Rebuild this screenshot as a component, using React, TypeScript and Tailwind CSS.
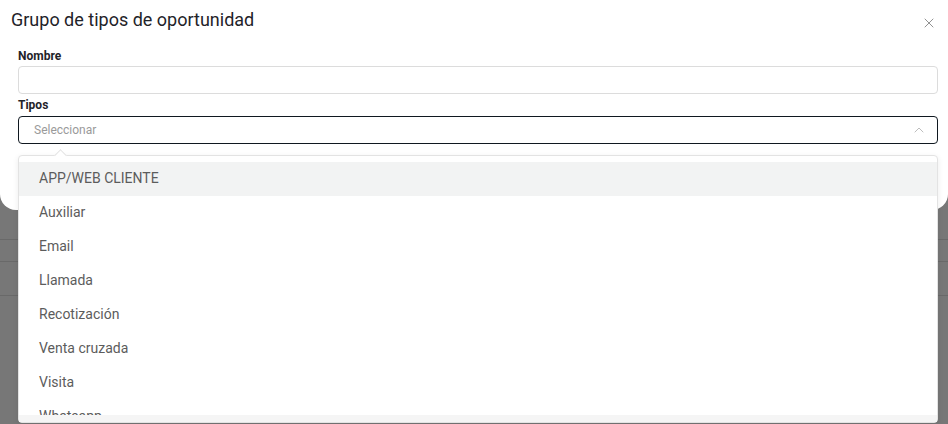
import { X, ChevronUp } from "lucide-react"

const tipos = [
  "APP/WEB CLIENTE",
  "Auxiliar",
  "Email",
  "Llamada",
  "Recotización",
  "Venta cruzada",
  "Visita",
  "Whatsapp",
]

export default function App() {
  return (
    <div className="relative h-[424px] w-[948px] overflow-hidden bg-[#777777] font-['Roboto',sans-serif]">
      {/* table rows behind the backdrop */}
      <div className="absolute inset-x-0 top-[210px] flex flex-col">
        <div className="h-[30px] border-b border-[#696969]" />
        <div className="h-[22px] border-b border-[#696969]" />
        <div className="h-[34px] border-b border-[#696969]" />
      </div>

      <div className="relative rounded-b-[16px] bg-white pb-[66px] pl-[18px] pr-[10px]">
        <div className="flex h-[38px] items-center justify-between -ml-[7px] pt-px">
          <h2 className="text-[18px] text-[#1f2329]">Grupo de tipos de oportunidad</h2>
          <X className="mr-[1px] mt-[6px] h-[16px] w-[16px] text-[#8a8a8a]" strokeWidth={1.4} />
        </div>

        <div className="mt-[10px] text-[12px] font-bold leading-[16px] text-[#1f2329]">Nombre</div>
        <div className="mt-[2px] h-[28px] rounded-[4px] border border-[#dcdcdc]" />

        <div className="mt-[3px] text-[12px] font-bold leading-[16px] text-[#1f2329]">Tipos</div>
        <div className="mt-[3px] flex h-[28px] items-center justify-between rounded-[4px] border border-[#101820] pl-[15px] pr-[10px]">
          <span className="text-[12px] text-[#9a9a9a]">Seleccionar</span>
          <ChevronUp className="h-[16px] w-[16px] text-[#b0b0b0]" strokeWidth={1.25} />
        </div>
      </div>

      {/* dropdown */}
      <div className="absolute left-[18px] top-[155px] w-[920px] rounded-[4px] border border-[#e3e3e3] bg-white shadow-[0_2px_6px_rgba(0,0,0,0.08)]">
        <div className="absolute -top-[5px] left-[37px] h-[9px] w-[9px] rotate-45 border-l border-t border-[#e3e3e3] bg-white" />
        <div className="relative h-[259px] overflow-hidden pt-[6px]">
          {tipos.map((t, i) => (
            <div
              key={t}
              className={`flex h-[34px] items-center px-[20px] pb-px text-[14px] text-[#5c5c5c] ${i === 0 ? "bg-[#f2f3f3]" : ""}`}
            >
              {t}
            </div>
          ))}
        </div>
        <div className="h-[7px] bg-[#f5f5f5]" />
      </div>
    </div>
  )
}
